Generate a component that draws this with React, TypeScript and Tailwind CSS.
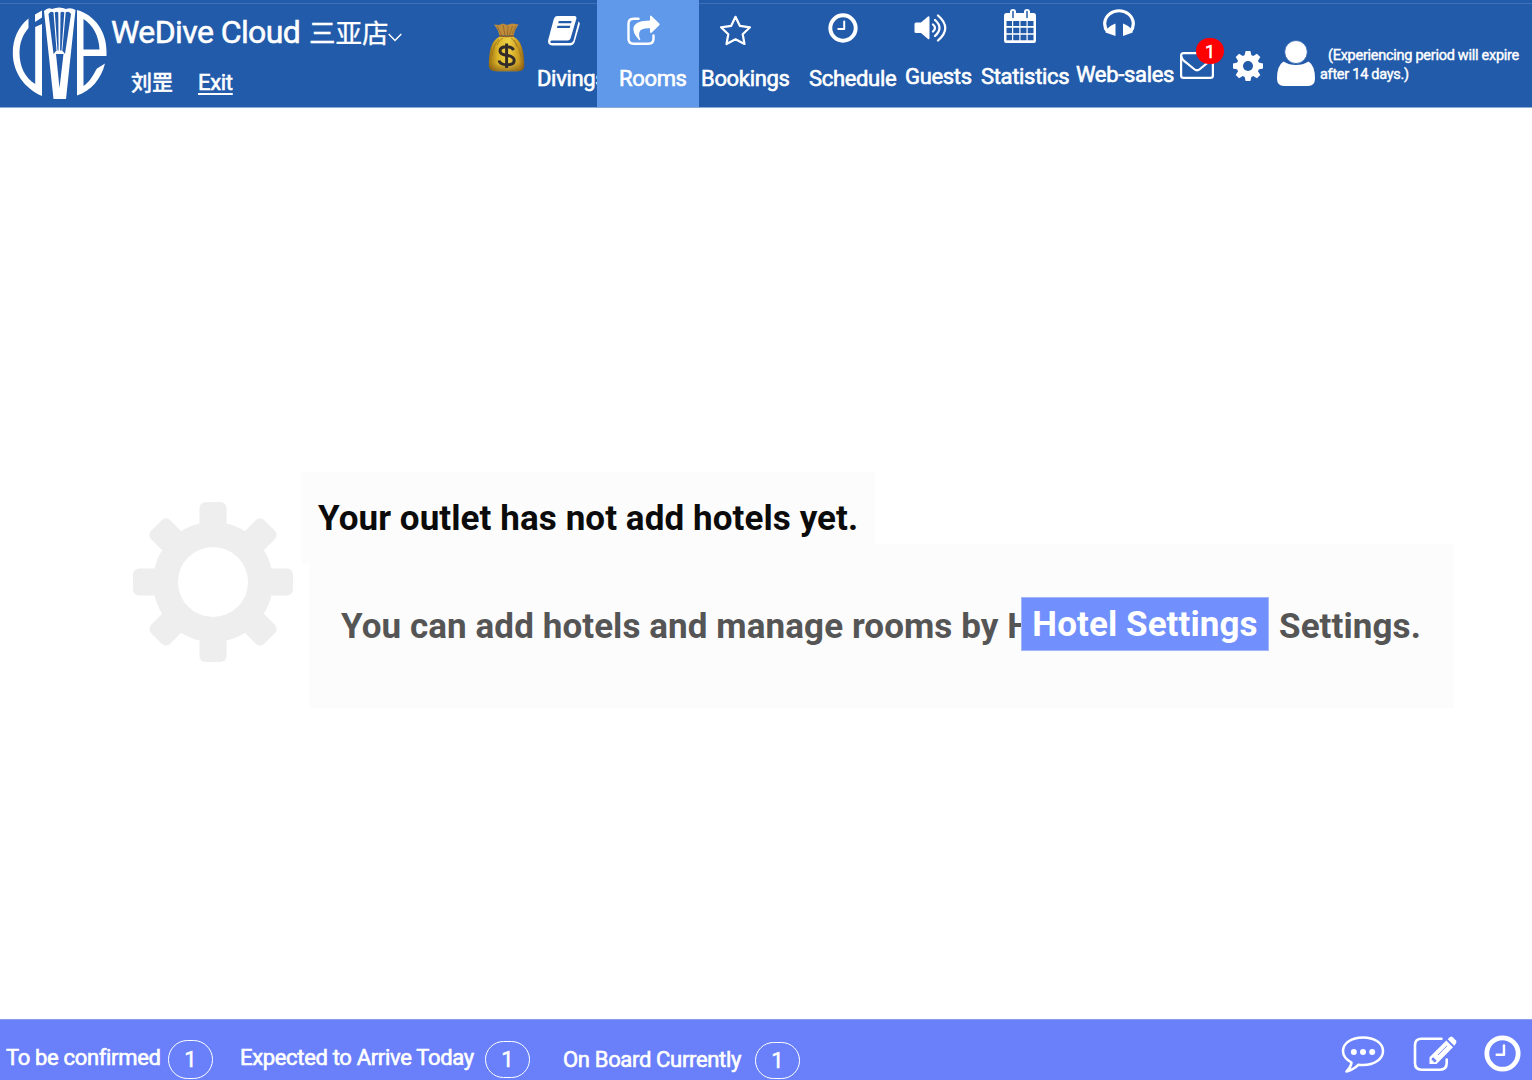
import type { ReactNode } from "react";

type IconProps = { box: string; className: string; children: ReactNode };

function Icon({ box, className, children }: IconProps) {
  return (
    <svg viewBox={box} className={"block shrink-0 " + className} fill="none" stroke="none" aria-hidden="true">
      {children}
    </svg>
  );
}

function Logo() {
  return (
    <Icon box="12 7 96 93" className="h-[93px] w-[96px]">
      <g fill="#fff">
        <path d="M28.500 18.500C18 27 12.800 39 12.800 53C12.800 72 24 88 42 96V24L35.200 27V84C25 78 19.500 66 19.500 53C19.500 43 22.500 35 28.500 28Z" />
        <path d="M35 14.500 42 10.500V17.500L35 22Z" />
        <path d="M44 11Q48 7 52 9Q59.500 6 66 9Q71 7 75.500 10L66 99H53.500Z" />
        <path
          fillRule="evenodd"
          d="M77 10C95 15 106.500 32 106.500 51V56H83.500V86C91 81 94 73 97 68.500L105 63.500C101 79 91 91 77 95.500ZM83.500 19V49.500H99.500C99 36 93 25 83.500 19Z"
        />
      </g>
      <g fill="#235bab">
        <path d="M48.500 14Q51 10.500 53.500 12.500L56.500 50.500L53.500 54Z" />
        <path d="M54.800 12.500Q56.500 11 58.300 12.500L58.600 50.500H57.500Z" />
        <path d="M60.500 12.500Q62.500 11 64.300 12.500L61.500 50.500H60.100Z" />
        <path d="M65.700 12.500Q68.500 10.500 71 14L65 54L62.300 50.500Z" />
        <path d="M56 54H63.500L59.500 88Z" />
      </g>
    </Icon>
  );
}

function MoneyBag() {
  return (
    <Icon box="487 22 39 51" className="h-[51px] w-[39px]">
      <defs>
        <linearGradient id="gold" x1="0" x2="1" y1="0" y2="0">
          <stop offset="0" stopColor="#9b7012" />
          <stop offset=".25" stopColor="#dcb528" />
          <stop offset=".55" stopColor="#eed044" />
          <stop offset=".85" stopColor="#c99b20" />
          <stop offset="1" stopColor="#8b611b" />
        </linearGradient>
        <linearGradient id="goldShade" x1="0" x2="0" y1="0" y2="1">
          <stop offset=".75" stopColor="#7b4f12" stopOpacity="0" />
          <stop offset="1" stopColor="#6c420e" stopOpacity=".6" />
        </linearGradient>
      </defs>
      <path d="M494 24.500L499 25L503 23.500L507 25L512 23.500L518.500 24.500Q515 29 513.500 35.500H499.500Q498 29 494 24.500Z" fill="#bf8c39" />
      <path d="M497 26L501.500 35M503 25L505 35M508 26L507.500 35M512.500 26L509.500 35M516 26L512 34" stroke="#8a5f28" strokeWidth=".7" />
      <path d="M499.500 36.500C491 41 489 50 488.800 66Q489.500 71.200 496 71.200H518Q524 71.200 524.300 66C524 50 521.500 41 513.500 36.500Z" fill="url(#gold)" />
      <path d="M499.500 36.500C491 41 489 50 488.800 66Q489.500 71.200 496 71.200H518Q524 71.200 524.300 66C524 50 521.500 41 513.500 36.500Z" fill="url(#goldShade)" />
      <path d="M499 39Q493 46 492 56M503 38Q498 41 497 45M511 38Q516 41 517 47M514 40Q520 48 521 57" stroke="#9b711b" strokeWidth=".7" />
      <path d="M499 35.500Q506.500 37.500 514 35.500" stroke="#8a5f28" strokeWidth="1.300" />
      <path d="M513.600 50Q512 46.800 506.500 46.800Q500 46.800 500 51Q500 54.300 506.500 55.300Q514.200 56.500 514.200 60.500Q514.200 64.800 507 64.800Q500 64.800 499 60.500M506.600 43.500V68" stroke="#332b29" strokeWidth="3" />
    </Icon>
  );
}

function Clock({ className }: { className: string }) {
  return (
    <Icon box="0 0 30 30" className={className}>
      <circle cx="15" cy="15" r="12.700" stroke="#fff" strokeWidth="3.900" />
      <path d="M16.200 8.500V16H10.300" stroke="#fff" strokeWidth="2" strokeLinecap="round" strokeLinejoin="round" />
    </Icon>
  );
}

const angles = [0, 45, 90, 135];

function BigGear() {
  return (
    <Icon box="-80 -80 160 160" className="size-[160px]">
      <g fill="#eee">
        {angles.map((a) => (
          <rect key={a} x="-13.500" y="-80" width="27" height="160" rx="6" transform={`rotate(${a})`} />
        ))}
        <circle r="60" />
      </g>
      <circle r="35" fill="#fff" />
    </Icon>
  );
}

function SmallGear() {
  return (
    <Icon box="-15 -15 30 30" className="size-[30px]">
      <g fill="#fff">
        {angles.map((a) => (
          <path key={a} d="M-2.400 -15H2.400L3.800 -9V9L2.400 15H-2.400L-3.800 9V-9Z" transform={`rotate(${a})`} />
        ))}
        <circle r="11.300" />
      </g>
      <circle r="5" fill="#235bab" />
    </Icon>
  );
}

function Book() {
  return (
    <Icon box="548 15 32 31" className="h-[31px] w-[32px]">
      <path fillRule="evenodd" fill="#fff" d="M557 16H575Q577 16.500 576.300 19L570.500 38.500Q569.700 40.500 567.700 40.500H551.500Q549.500 41.500 551 43H570Q572.500 43 573.500 40.500L578.500 21.500Q580.200 22.500 579.700 24.500L574.500 42.500Q573 45.500 570 45.500H552Q547 45 548.300 39.500L553.800 19Q554.700 16 557 16ZM558.800 21L558.200 23.200H571L571.700 21ZM557.500 25.700L556.900 28H569.700L570.400 25.700Z" />
    </Icon>
  );
}

function Share() {
  return (
    <Icon box="627 15 33 31" className="h-[31px] w-[33px]">
      <path d="M638.500 18.700H633.500Q628.500 18.700 628.500 23.700V38.700Q628.500 43.700 633.500 43.700H648.500Q653.500 43.700 653.500 38.700V35.500" stroke="#fff" strokeWidth="2.400" strokeLinecap="round" />
      <path d="M650 16.500Q650 15 651.500 16L659.300 23.500Q660 24.500 659.300 25.300L651.500 32.700Q650 33.500 650 31.800V28.300Q641 27.800 639.500 32Q638.300 34.500 640.300 39.700Q640 41 638.700 39.500Q632.500 33 633.500 27.500Q635.500 20.500 650 20.500Z" fill="#fff" />
    </Icon>
  );
}

function Star() {
  return (
    <Icon box="719 14 33 32" className="h-[32px] w-[33px]">
      <path d="M735.500 16.800L739.800 25.800L750 27.300L742.700 34.300L744.500 44L735.500 39.300L726.500 44L728.300 34.300L721 27.300L731.200 25.800Z" stroke="#fff" strokeWidth="2.200" strokeLinejoin="round" />
    </Icon>
  );
}

function Speaker() {
  return (
    <Icon box="914 13 33 30" className="h-[30px] w-[33px]">
      <path d="M916 22.500H921L928 16.500Q929.500 15.800 929.500 17.500V38Q929.500 40 928 39L921 33H916Q914.500 33 914.500 31.500V24Q914.500 22.500 916 22.500Z" fill="#fff" />
      <path d="M933 24.500Q937 28 933 31.500M935 20Q944 28 935 36M938 15.500Q952.500 28 938 40.500" stroke="#fff" strokeWidth="2.300" strokeLinecap="round" />
    </Icon>
  );
}

function Calendar() {
  return (
    <Icon box="1004 9 32 34" className="h-[34px] w-[32px]">
      <path fillRule="evenodd" fill="#fff" d="M1006 13H1010V11Q1010.500 9 1013 9Q1015.500 9 1016 11V13H1024V11Q1024.500 9 1027 9Q1029.500 9 1030 11V13H1034Q1036 13 1036 15.500V40.500Q1036 43 1034 43H1006Q1004 43 1004 40.500V15.500Q1004 13 1006 13ZM1006.500 21V26H1012V21ZM1013.200 21V26H1019.300V21ZM1020.500 21V26H1026.500V21ZM1027.700 21V26H1033.500V21ZM1006.500 27.700V33.300H1012V27.700ZM1013.200 27.700V33.300H1019.300V27.700ZM1020.500 27.700V33.300H1026.500V27.700ZM1027.700 27.700V33.300H1033.500V27.700ZM1006.500 34.700V40.300H1012V34.700ZM1013.200 34.700V40.300H1019.300V34.700ZM1020.500 34.700V40.300H1026.500V34.700ZM1027.700 34.700V40.300H1033.500V34.700Z" />
      <path d="M1013 11.500V17.500M1027 11.500V17.500" stroke="#235bab" strokeWidth="1.500" strokeLinecap="round" />
    </Icon>
  );
}

function Headphones() {
  return (
    <Icon box="1103 8 33 29" className="h-[29px] w-[33px]">
      <path d="M1107.500 31.500A14.300 13 0 1 1 1130.500 31.500" stroke="#fff" strokeWidth="3.200" />
      <path d="M1115.500 23.500V36L1105.500 32.500Q1107 26.500 1115.500 23.500ZM1123 23.500V36L1132.700 32.500Q1131.500 26.500 1123 23.500Z" fill="#fff" />
    </Icon>
  );
}

function Mail() {
  return (
    <Icon box="1180 52 34 27" className="h-[27px] w-[34px]">
      <rect x="1181.100" y="53.100" width="31.800" height="24.800" rx="2.500" stroke="#fff" strokeWidth="2.200" />
      <path d="M1181 56Q1182 60 1186 62.500L1194 69Q1197 71.500 1200 69L1208 62.500Q1212 60 1213 56" stroke="#fff" strokeWidth="2.200" />
    </Icon>
  );
}

function Person() {
  return (
    <Icon box="1277 40 38 46" className="h-[46px] w-[38px]">
      <path d="M1283.500 61.500Q1277 65.500 1277 78.500Q1277 86 1284 86H1308Q1315 86 1315 78.500Q1315 65.500 1308.500 61.500Q1303 65 1296 65Q1289 65 1283.500 61.500Z" fill="#fff" />
      <ellipse cx="1296" cy="52" rx="11.300" ry="11.500" fill="#fff" stroke="#235bab" strokeWidth=".8" />
    </Icon>
  );
}

function Chat() {
  return (
    <Icon box="1341 1036 44 37" className="h-[37px] w-[44px]">
      <path d="M1351.500 1062.500Q1343 1058 1343 1051C1343 1043 1351.500 1037.500 1363 1037.500S1383 1043 1383 1051S1374.500 1065 1363 1065Q1360.500 1065 1358.500 1064.700Q1354 1069.500 1346.500 1071.500Q1351 1067 1351.500 1062.500Z" stroke="#fff" strokeWidth="2.500" strokeLinejoin="round" />
      <g fill="#fff">
        <circle cx="1353.800" cy="1052" r="3" />
        <circle cx="1363" cy="1052" r="3" />
        <circle cx="1372.200" cy="1052" r="3" />
      </g>
    </Icon>
  );
}

function Edit() {
  return (
    <Icon box="1413 1036 44 36" className="h-[36px] w-[44px]">
      <path d="M1441.500 1038.800H1421.500Q1415 1038.800 1415 1045.300V1063Q1415 1069.700 1421.500 1069.700H1440Q1446.700 1069.700 1446.700 1063V1059.500" stroke="#fff" strokeWidth="2.600" strokeLinecap="round" />
      <path d="M1446.300 1040.500L1453 1047.200L1436.500 1064H1429.500V1057.200Z" fill="#fff" />
      <path d="M1447.700 1039.200L1449.800 1037.200Q1451.300 1036 1452.700 1037.200L1456 1040.500Q1457 1042 1455.900 1043.500L1454.200 1045.700Z" fill="#fff" />
      <path d="M1431.700 1058.500V1060.500H1433.500V1062.300H1435.300L1436.700 1060.800L1433.200 1057.200Z" fill="#6980fa" />
      <path d="M1438 1055L1447 1045.800" stroke="#6980fa" strokeWidth=".9" />
    </Icon>
  );
}

const labelClass = "block whitespace-nowrap text-[22px] leading-[26px] tracking-[-0.33px] [-webkit-text-stroke:0.6px_white]";

type NavProps = { cell: string; icon: ReactNode; iconRow: string; label: string; labelPad: string };

function NavItem({ cell, icon, iconRow, label, labelPad }: NavProps) {
  return (
    <a className={"flex h-full shrink-0 flex-col overflow-hidden " + cell}>
      <span className={"block shrink-0 " + iconRow}>{icon}</span>
      <span className={labelClass + " " + labelPad}>{label}</span>
    </a>
  );
}

type StatProps = { label: string; className: string; labelClassName: string; pill: string };

function Stat({ label, className, labelClassName, pill }: StatProps) {
  return (
    <div className={"flex shrink-0 items-start " + className}>
      <span className={labelClass + " " + labelClassName}>{label}</span>
      <span className={"flex w-[45px] shrink-0 items-center justify-center rounded-[20px] border border-white text-[22px] [-webkit-text-stroke:0.5px_white] " + pill}>
        1
      </span>
    </div>
  );
}

export default function App() {
  return (
    <div className="flex h-[1080px] w-[1532px] flex-col overflow-hidden bg-white font-['Roboto','Noto_Sans_CJK_SC',sans-serif] text-white">
      <header className="h-[108px] shrink-0 border-b border-[#8eabd8] bg-[#235bab] bg-[linear-gradient(#235bab_3px,#3f70b9_3px,#3f70b9_4px,transparent_4px)]">
        <div className="flex h-[107px] items-start">
          <div className="w-[110px] shrink-0 pt-[7px] pl-[12px]">
            <Logo />
          </div>
          <div className="flex w-[377px] shrink-0 flex-col">
            <div className="flex h-[65px] items-start pt-[13px] pl-px">
              <span className="w-[198px] shrink-0 text-[32px] leading-[38px] tracking-[-0.6px] whitespace-nowrap [-webkit-text-stroke:0.5px_white]">WeDive Cloud</span>
              <span className="w-[79px] shrink-0 pt-[2px] text-[26.500px] leading-[38px] whitespace-nowrap [-webkit-text-stroke:0.3px_white]">三亚店</span>
              <Icon box="0 0 14 9" className="mt-[20px] h-[9px] w-[14px]">
                <path d="M.7 1L7 7.500L13.300 1" stroke="#fff" strokeWidth="1.400" />
              </Icon>
            </div>
            <div className="flex pl-[21px] text-[22px] leading-[36px]">
              <span className="w-[67px] text-[21px] font-medium [-webkit-text-stroke:0.4px_white]">刘罡</span>
              <a className="tracking-[-0.3px] underline decoration-[1.500px] underline-offset-[3px] [-webkit-text-stroke:0.6px_white]">Exit</a>
            </div>
          </div>
          <div className="w-[50px] shrink-0 pt-[22px]">
            <MoneyBag />
          </div>
          <NavItem cell="w-[60px]" icon={<Book />} iconRow="h-[66px] pt-[15px] pl-[11px]" label="Divings" labelPad="" />
          <NavItem cell="w-[102px] bg-[#6099ea]" icon={<Share />} iconRow="h-[66px] pt-[15px] pl-[30px]" label="Rooms" labelPad="pl-[22px]" />
          <NavItem cell="w-[104px]" icon={<Star />} iconRow="h-[66px] pt-[14px] pl-[20px]" label="Bookings" labelPad="pl-[2px]" />
          <NavItem cell="w-[100px]" icon={<Clock className="size-[30px]" />} iconRow="h-[66px] pt-[13px] pl-[25px]" label="Schedule" labelPad="pl-[6px]" />
          <NavItem cell="w-[75px]" icon={<Speaker />} iconRow="h-[64px] pt-[13px] pl-[11px]" label="Guests" labelPad="pl-[2px]" />
          <NavItem cell="w-[95px]" icon={<Calendar />} iconRow="h-[64px] pt-[9px] pl-[26px]" label="Statistics" labelPad="pl-[3px]" />
          <NavItem cell="w-[103px]" icon={<Headphones />} iconRow="h-[62px] pt-[8px] pl-[30px]" label="Web-sales" labelPad="pl-[3px]" />
          <div className="relative w-[57px] shrink-0 pt-[52px] pl-[4px]">
            <Mail />
            <span className="absolute top-[38px] left-[20px] flex h-[26px] w-[28px] items-center justify-center rounded-full bg-[#f00] text-[18px] [-webkit-text-stroke:0.5px_white]">
              1
            </span>
          </div>
          <div className="w-[44px] shrink-0 pt-[51px]">
            <SmallGear />
          </div>
          <div className="w-[43px] shrink-0 pt-[40px]">
            <Person />
          </div>
          <p className="w-[212px] pt-[46px] text-[14.500px] leading-[19px] tracking-[-0.27px] whitespace-nowrap [-webkit-text-stroke:0.4px_white]">
            <span className="ml-[8px]">(Experiencing period will expire</span>
            <br />
            after 14 days.)
          </p>
        </div>
      </header>

      <main className="flex flex-1 items-start pt-[364px] pl-[133px] font-bold">
        <div className="w-[169px] shrink-0 pt-[30px]">
          <BigGear />
        </div>
        <div className="flex flex-col items-start text-[35px] leading-[42px] tracking-[0.08px] whitespace-nowrap">
          <div className="h-[92px] w-[573px] bg-[#fcfcfc] pt-[26px] pl-[16px] text-[#0b0b0b]">Your outlet has not add hotels yet.</div>
          <div className="-mt-[20px] ml-[7px] flex h-[164px] w-[1145px] items-start bg-[#fcfcfc] pt-[53px] pl-[32px] text-[#555]">
            <span className="w-[680px] shrink-0 overflow-hidden pt-[9px]">You can add hotels and manage rooms by H</span>
            <a className="flex h-[54px] w-[248px] shrink-0 items-center justify-center border border-[#a3b5fb] bg-[#7190fd] text-white">
              <span className="pt-px">Hotel Settings</span>
            </a>
            <span className="pt-[9px] pl-[10px]">Settings.</span>
          </div>
        </div>
      </main>

      <footer className="flex h-[61px] shrink-0 items-start border-t border-[#8c9de9] bg-[#6980fa]">
        <Stat label="To be confirmed" className="w-[240px] pl-[6px]" labelClassName="w-[162px] pt-[25px]" pill="mt-[20px] h-[39px]" />
        <Stat label="Expected to Arrive Today" className="w-[322px]" labelClassName="w-[245px] pt-[25px]" pill="mt-[21px] h-[37px]" />
        <Stat label="On Board Currently" className="w-[779px]" labelClassName="w-[193px] pt-[27px] pl-px" pill="mt-[22px] h-[37px]" />
        <div className="w-[72px] shrink-0 pt-[16px]">
          <Chat />
        </div>
        <div className="w-[71px] shrink-0 pt-[16px]">
          <Edit />
        </div>
        <div className="shrink-0 pt-[15px]">
          <Clock className="size-[37px]" />
        </div>
      </footer>
    </div>
  );
}
